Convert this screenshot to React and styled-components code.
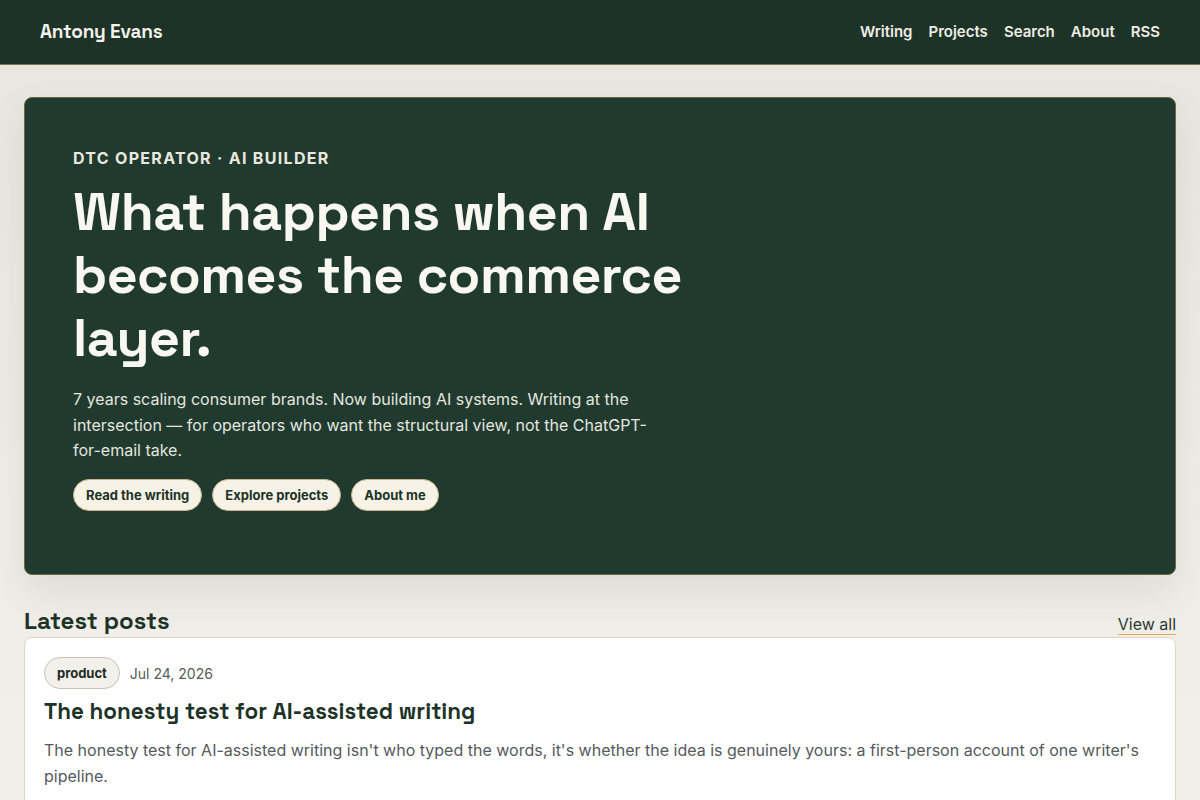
import React from 'react';
import styled, { createGlobalStyle } from 'styled-components';

const display = `"Space Grotesk", "Inter", "Liberation Sans", sans-serif`;
const body = `"Inter", "Liberation Sans", sans-serif`;

const Global = createGlobalStyle`
  * { box-sizing: border-box; }
  body {
    margin: 0;
    font-family: ${body};
    background: linear-gradient(#e7e5de 0%, #efede7 60%, #f1efea 100%);
    min-height: 100vh;
    color: #1e3328;
  }
`;

const Header = styled.header`
  height: 65px;
  background: #1d3328;
  border-bottom: 1px solid #6f7a55;
  display: flex;
  align-items: center;
  justify-content: space-between;
  padding: 0 40px 2px;
`;

const Brand = styled.a`
  font-family: ${display};
  font-size: 19px;
  font-weight: 700;
  color: #f4f2ea;
  letter-spacing: -0.2px;
`;

const Nav = styled.nav`
  display: flex;
  gap: 16px;
`;

const NavLink = styled.a`
  font-size: 15px;
  font-weight: 600;
  color: #eeece4;
`;

const Main = styled.main`
  padding: 32px 24px 0;
`;

const Hero = styled.section`
  background: #213a2f;
  border: 1px solid #6c6a45;
  border-radius: 8px;
  padding: 50px 48px 56px;
  min-height: 478px;
  box-shadow: 0 18px 40px rgba(60, 60, 40, 0.10);
`;

const Eyebrow = styled.div`
  font-size: 16px;
  font-weight: 700;
  letter-spacing: 1.3px;
  color: #eae8de;
  text-transform: uppercase;
`;

const Title = styled.h1`
  font-family: ${display};
  font-size: 53.6px;
  line-height: 63px;
  font-weight: 700;
  letter-spacing: -0.5px;
  color: #f8f7f1;
  margin: 12px 0 18px;
  max-width: 640px;
`;

const Lede = styled.p`
  font-size: 16px;
  line-height: 25.5px;
  color: #e4e6df;
  margin: 0 0 15px;
  max-width: 590px;
`;

const Actions = styled.div`
  display: flex;
  gap: 10px;
`;

const Pill = styled.a`
  display: inline-flex;
  align-items: center;
  height: 32px;
  padding: 0 12px;
  border-radius: 999px;
  background: #f7f2e6;
  border: 1px solid #c9b58a;
  color: #1d3328;
  font-size: 13px;
  font-weight: 700;
`;

const SectionHead = styled.div`
  display: flex;
  justify-content: space-between;
  align-items: flex-end;
  margin-top: 32px;
`;

const SectionTitle = styled.h2`
  font-family: ${display};
  font-size: 24px;
  font-weight: 700;
  margin: 0;
  line-height: 28px;
  color: #1e3328;
`;

const ViewAll = styled.a`
  font-size: 16px;
  color: #2b3a33;
  border-bottom: 1px solid #e8a657;
  line-height: 20px;
`;

const Card = styled.article`
  background: #ffffff;
  border: 1px solid #ddd7be;
  border-radius: 8px;
  padding: 19px 19px 20px;
  margin-top: 2px;
`;

const Meta = styled.div`
  display: flex;
  align-items: center;
  gap: 10px;
`;

const Tag = styled.span`
  display: inline-flex;
  align-items: center;
  height: 32px;
  padding: 0 12px;
  border-radius: 999px;
  background: #f2f0ea;
  border: 1px solid #c7c4b9;
  font-size: 13px;
  font-weight: 700;
  color: #1e2a24;
`;

const Date = styled.span`
  font-size: 14px;
  color: #555b58;
`;

const CardTitle = styled.h3`
  font-family: ${display};
  font-size: 22.4px;
  font-weight: 700;
  margin: 9px 0 11px;
  line-height: 28px;
  color: #1e3328;
`;

const Excerpt = styled.p`
  margin: 0;
  font-size: 16px;
  line-height: 26px;
  color: #555a5e;
`;

export default function App() {
  return (
    <>
      <Global />
      <Header>
        <Brand>Antony Evans</Brand>
        <Nav>
          {['Writing', 'Projects', 'Search', 'About', 'RSS'].map((n) => (
            <NavLink key={n}>{n}</NavLink>
          ))}
        </Nav>
      </Header>
      <Main>
        <Hero>
          <Eyebrow>DTC operator · AI builder</Eyebrow>
          <Title>What happens when AI becomes the commerce layer.</Title>
          <Lede>
            7 years scaling consumer brands. Now building AI systems. Writing at the
            intersection — for operators who want the structural view, not the ChatGPT-for-email take.
          </Lede>
          <Actions>
            <Pill>Read the writing</Pill>
            <Pill>Explore projects</Pill>
            <Pill>About me</Pill>
          </Actions>
        </Hero>
        <SectionHead>
          <SectionTitle>Latest posts</SectionTitle>
          <ViewAll>View all</ViewAll>
        </SectionHead>
        <Card>
          <Meta>
            <Tag>product</Tag>
            <Date>Jul 24, 2026</Date>
          </Meta>
          <CardTitle>The honesty test for AI-assisted writing</CardTitle>
          <Excerpt>
            The honesty test for AI-assisted writing isn't who typed the words, it's whether the idea is
            genuinely yours: a first-person account of one writer's pipeline.
          </Excerpt>
        </Card>
      </Main>
    </>
  );
}
